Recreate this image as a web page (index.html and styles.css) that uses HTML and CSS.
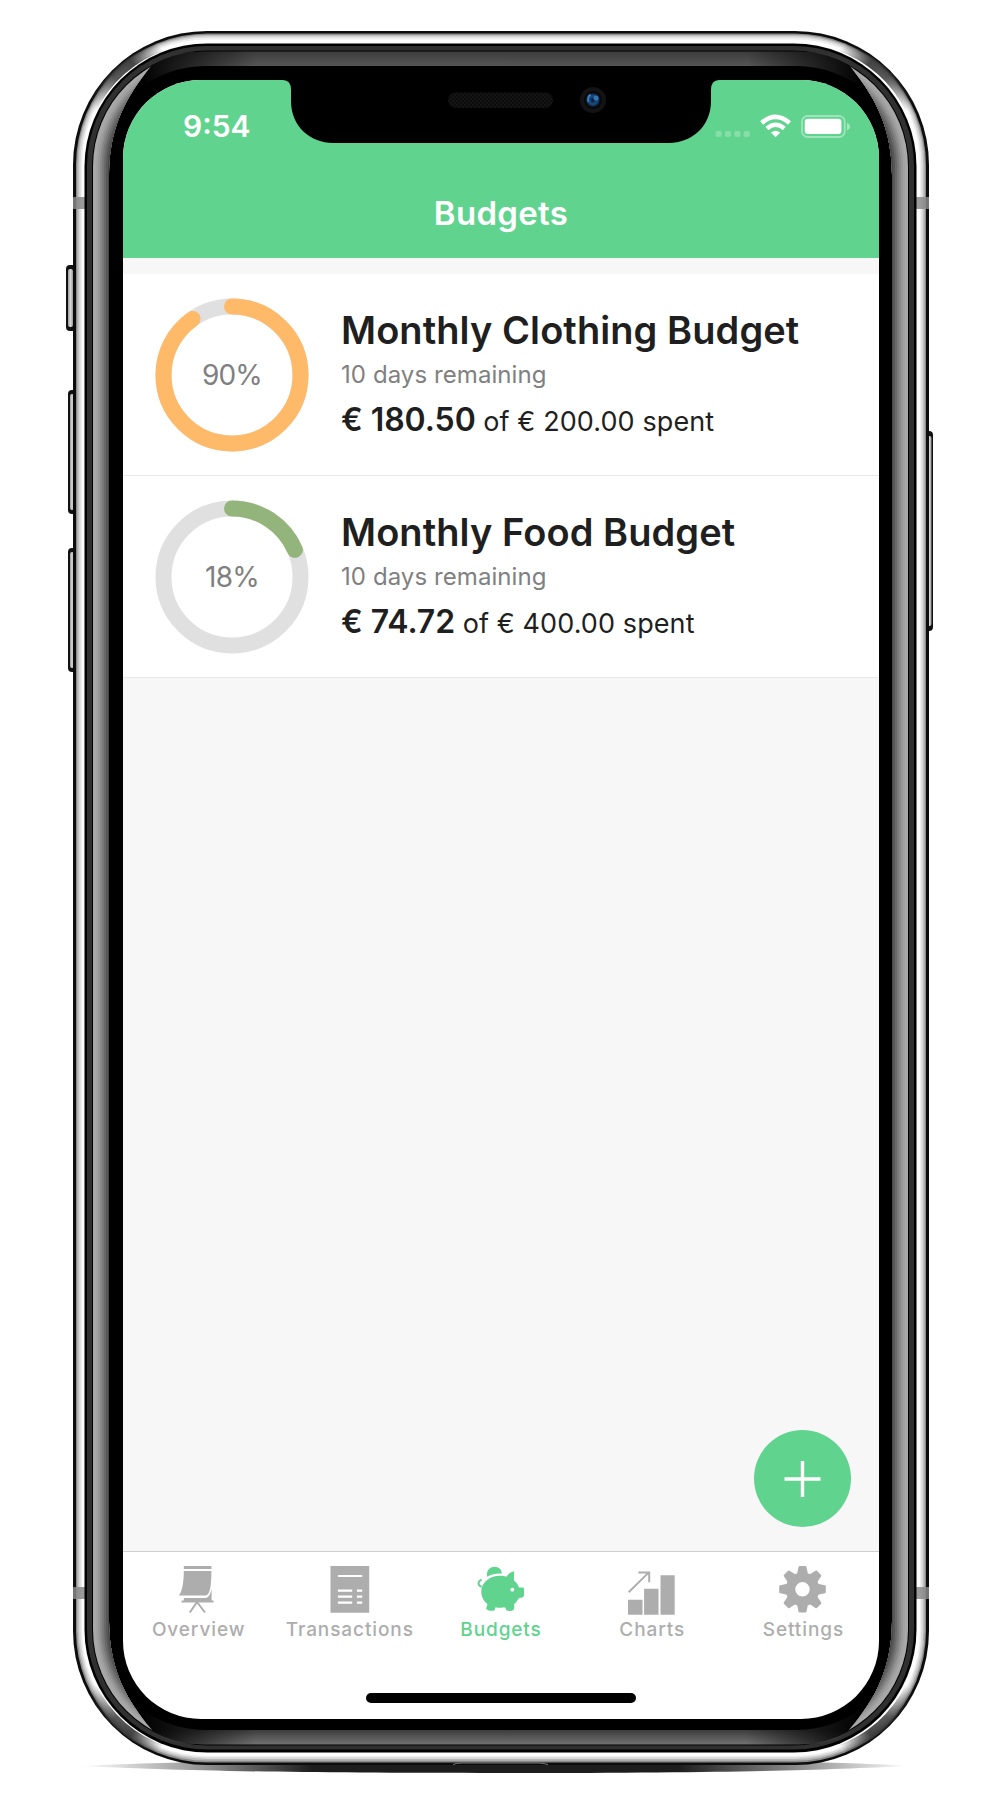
FILE: index.html
```html
<!DOCTYPE html>
<html lang="en">
<head>
<meta charset="utf-8">
<title>Budgets</title>
<link rel="stylesheet" href="styles.css">
</head>
<body>
<div class="phone">
  <svg class="frame" viewBox="0 0 1000 1802" aria-hidden="true">
    <defs>
      <linearGradient id="shadow" x1="0" x2="1"><stop offset="0" stop-color="#fff"/><stop offset=".14" stop-color="#999"/><stop offset=".28" stop-color="#1d1d1d"/><stop offset=".72" stop-color="#1d1d1d"/><stop offset=".86" stop-color="#888"/><stop offset="1" stop-color="#fff"/></linearGradient>
      <linearGradient id="button" x1="0" x2="1"><stop offset="0" stop-color="#999"/><stop offset=".5" stop-color="#d8d8d8"/><stop offset="1" stop-color="#999"/></linearGradient>
      <linearGradient id="glareT" gradientUnits="userSpaceOnUse" x1="0" x2="0" y1="51" y2="66"><stop offset="0" stop-color="#3c3c3c"/><stop offset="1" stop-color="#555"/></linearGradient>
      <linearGradient id="glareB" gradientUnits="userSpaceOnUse" x1="0" x2="0" y1="1730" y2="1745"><stop offset="0" stop-color="#3c3c3c"/><stop offset="1" stop-color="#747474"/></linearGradient>
      <linearGradient id="fade" gradientUnits="userSpaceOnUse" x1="140" x2="862" y1="0" y2="0"><stop offset="0" stop-color="#000"/><stop offset=".16" stop-color="#fff"/><stop offset=".84" stop-color="#fff"/><stop offset="1" stop-color="#000"/></linearGradient>
      <linearGradient id="corner" gradientUnits="userSpaceOnUse" x1="92" y1="108" x2="162" y2="48"><stop offset="0" stop-color="#333" stop-opacity="0"/><stop offset=".4" stop-color="#333" stop-opacity=".8"/><stop offset=".65" stop-color="#333" stop-opacity=".9"/><stop offset="1" stop-color="#333" stop-opacity="0"/></linearGradient>
      <mask id="ends" maskUnits="userSpaceOnUse" x="0" y="0" width="1000" height="1802"><rect x="140" y="40" width="722" height="1720" fill="url(#fade)"/></mask>
      <clipPath id="sides"><path d="M92 170C92 112 120 73 153 64C133 88 109 120 109 175V1621C109 1676 133 1708 153 1731C120 1722 92 1684 92 1626z"/><path d="M909 170C909 112 881 73 848 64C868 88 892 120 892 175V1621C892 1676 868 1708 848 1731C881 1722 909 1684 909 1626z"/></clipPath>
      <radialGradient id="lens"><stop offset="0" stop-color="#0b1730"/><stop offset=".6" stop-color="#1c4f86"/><stop offset="1" stop-color="#0a1628"/></radialGradient>
      <pattern id="mesh" width="4" height="4" patternUnits="userSpaceOnUse"><rect width="4" height="4" fill="#0c0c0c"/><circle cx="1" cy="1" r=".7" fill="#242424"/><circle cx="3" cy="3" r=".7" fill="#242424"/></pattern>
    </defs>
    <path d="M80 1766C180 1761 250 1761 501 1761S820 1761 910 1766C820 1770 740 1773 501 1773S170 1770 80 1766z" fill="url(#shadow)"/>
    <g fill="#111">
      <rect x="66" y="265" width="14" height="66" rx="4"/>
      <rect x="68" y="390" width="12" height="124" rx="4"/>
      <rect x="68" y="548" width="12" height="124" rx="4"/>
      <rect x="920" y="431" width="13" height="200" rx="4"/>
    </g>
    <g fill="url(#button)">
      <rect x="68" y="269" width="5" height="58" rx="2"/>
      <rect x="70" y="394" width="4" height="116" rx="2"/>
      <rect x="70" y="552" width="4" height="116" rx="2"/>
      <rect x="927" y="436" width="4.500" height="190" rx="2"/>
    </g>
    <rect x="73" y="31" width="856" height="1734" rx="134" fill="#0c0c0c"/>
    <rect x="76" y="33.500" width="850" height="1729" rx="131" fill="#8a8a8a"/>
    <rect x="77.200" y="34.700" width="847.600" height="1726" rx="130" fill="#b8b8b8"/>
    <rect x="78.700" y="36" width="844.600" height="1723" rx="128.500" fill="#d6d6d6"/>
    <rect x="80.500" y="37.500" width="841" height="1720" rx="127" fill="#eee"/>
    <rect x="82" y="39.500" width="838" height="1716.500" rx="125" fill="#fdfdfd"/>
    <g fill="none" stroke="url(#corner)" stroke-width="10">
      <path id="reflection" d="M91 110A127.500 127.500 0 0 1 165 45"/>
      <use href="#reflection" transform="translate(1002 0) scale(-1 1)"/>
      <use href="#reflection" transform="translate(0 1796) scale(1 -1)"/>
      <use href="#reflection" transform="translate(1002 1796) scale(-1 -1)"/>
    </g>
    <g fill="#888" opacity=".85">
      <rect x="73" y="197" width="13" height="12"/><rect x="915" y="197" width="14" height="12"/>
      <rect x="73" y="1587" width="13" height="12"/><rect x="915" y="1587" width="14" height="12"/>
    </g>
    <rect x="84.500" y="43.500" width="832" height="1709" rx="123" fill="#000"/>
    <rect x="87" y="46" width="827" height="1703.500" rx="120" fill="#303030"/>
    <rect x="92" y="50.500" width="817" height="1695" rx="116" fill="#000"/>
    <g mask="url(#ends)">
      <path d="M145 68C165 55 180 51.500 208 51.500H794C822 51.500 837 55 857 68V84C830 68 812 66 790 66H212C190 66 172 68 145 84z" fill="url(#glareT)"/>
      <path d="M145 1728C165 1741 180 1744.500 208 1744.500H794C822 1744.500 837 1741 857 1728V1712C830 1728 812 1730 790 1730H212C190 1730 172 1728 145 1712z" fill="url(#glareB)"/>
    </g>
    <g clip-path="url(#sides)">
      <rect x="93" y="51.500" width="815" height="1693" rx="115" fill="#a8a8a8"/>
      <rect x="96" y="54.500" width="809" height="1687" rx="112" fill="#a2a2a2"/>
      <rect x="98" y="56.500" width="805" height="1683" rx="110" fill="#979797"/>
      <rect x="100" y="58.500" width="801" height="1679" rx="108" fill="#888"/>
      <rect x="102" y="60.500" width="797" height="1675" rx="106" fill="#787878"/>
      <rect x="104" y="62.500" width="793" height="1671" rx="104" fill="#686868"/>
      <rect x="106" y="64.500" width="789" height="1667" rx="102" fill="#575757"/>
      <rect x="108" y="66.500" width="785" height="1663" rx="100" fill="#484848"/>
    </g>
    <path d="M453 1764.500Q456 1763 462 1763H538Q543 1763 548 1764.500" fill="none" stroke="#777"/>
  </svg>

  <main class="screen">
    <header class="header">
      <div class="status">
        <span class="time">9:54</span>
        <svg class="indicators" width="136" height="28" viewBox="715 112 136 28" fill="#fff" aria-hidden="true">
          <g opacity=".25"><rect x="715.700" y="131" width="6" height="6" rx="1.700"/><rect x="725" y="131" width="6" height="6" rx="1.700"/><rect x="734.400" y="131" width="6" height="6" rx="1.700"/><rect x="743.700" y="131" width="6" height="6" rx="1.700"/></g>
          <path d="M775.600 137.200L770.900 132.500Q775.600 128.800 780.300 132.500z"/>
          <path d="M766.900 128.500Q775.600 120.900 784.300 128.500" fill="none" stroke="#fff" stroke-width="4.400"/>
          <path d="M761.700 122.900Q775.600 110.900 789.500 122.900" fill="none" stroke="#fff" stroke-width="4.600"/>
          <rect x="802" y="116" width="42.700" height="21" rx="5.500" fill="none" stroke="#fff" stroke-width="1.800" opacity=".4"/>
          <rect x="804.700" y="118.700" width="36.700" height="15.400" rx="3"/>
          <path d="M847 123C851 124.500 851 129 847 130.500z" opacity=".45"/>
        </svg>
      </div>
      <h1 class="title">Budgets</h1>
    </header>

    <section class="content">
      <article class="budget">
        <div class="ring">
          <svg width="154" height="154" viewBox="0 0 154 154" aria-hidden="true"><circle class="track" cx="77" cy="77" r="68.500"/><circle class="value clothing" cx="77" cy="77" r="68.500" pathLength="100" stroke-dasharray="90.250 100"/></svg>
          <span class="percent">90%</span>
        </div>
        <div class="details">
          <h2 class="name">Monthly Clothing Budget</h2>
          <p class="remaining">10 days remaining</p>
          <p class="amount"><strong>€ 180.50</strong><span>of € 200.00 spent</span></p>
        </div>
      </article>
      <article class="budget">
        <div class="ring">
          <svg width="154" height="154" viewBox="0 0 154 154" aria-hidden="true"><circle class="track" cx="77" cy="77" r="68.500"/><circle class="value food" cx="77" cy="77" r="68.500" pathLength="100" stroke-dasharray="18.500 100"/></svg>
          <span class="percent">18%</span>
        </div>
        <div class="details">
          <h2 class="name">Monthly Food Budget</h2>
          <p class="remaining">10 days remaining</p>
          <p class="amount"><strong>€ 74.72</strong><span>of € 400.00 spent</span></p>
        </div>
      </article>
      <button class="add" aria-label="Add budget"><svg width="38" height="38" viewBox="0 0 38 38"><path d="M18.500 1V37M.5 19H36.500" stroke="#fff" stroke-width="3.400"/></svg></button>
    </section>

    <nav class="tabs">
      <a class="tab">
        <svg class="icon" viewBox="0 0 48 52"><g transform="translate(-.8 0)"><path d="M9.600 2H37.200V5H9.600zM9.600 7H37.200C37.200 20 36 31.500 31.500 31.500H4.500C8 28 9.600 18 9.600 7zM9.600 34H31C34 34 36 31 37.400 25V36.500H39.400V38.500H7.400V36.500H9.600z"/><path class="line" d="M22.800 38L15.600 48.500M22.800 38L30.800 48.500"/></g></svg>
        <span>Overview</span>
      </a>
      <a class="tab">
        <svg class="icon" viewBox="0 0 48 52"><path d="M4.500 2H43.200V48.700H4.500z"/><path d="M11.900 12H36.200M11.900 26.700H26.200M30.900 26.700H36.200M11.900 32.700H26.200M30.900 32.700H36.200M11.900 38.700H26.200M30.900 38.700H36.200" stroke="#fff" stroke-width="2.200"/></svg>
        <span>Transactions</span>
      </a>
      <a class="tab active">
        <svg class="icon" viewBox="0 0 48 52"><path d="M10.200 12.700C9 7 12.500 2.800 17.400 2.800C22 2.800 25 6 24.800 9.600C19.500 9.300 14.500 10.400 10.200 12.700z"/><path d="M23 11.800C25.500 11.800 27.500 12.100 29.300 12.700C31 10 34 7.800 37.300 7.300C36.900 10.500 37 14 36.900 16.500C39.500 18.500 41 20.600 42 23.600H45.500Q47 23.600 47 25V31.500Q46.500 34 42 34C40.700 36.500 38.500 39 36.800 40.500C37.800 42 37.500 44 36.400 46.200C34 47.200 31 47.200 29 46C29 44 28 43.300 27 43.300C24 44 21 44 18.500 43.300C18 45 17.800 46 17.300 46.600C14.500 47.200 11 46.700 9.200 45C9.500 43 9.800 42 10.500 40.200C7 37.500 4.300 33 4.300 27.500C4.300 19 12 11.800 23 11.800z"/><circle cx="35.300" cy="25.700" r="1.900" fill="#fff"/><path class="line" d="M4.600 15.700C1.500 16.600.9 19.300 2.200 21.200C3 22.300 3.700 22.600 4.700 22.700"/></svg>
        <span>Budgets</span>
      </a>
      <a class="tab">
        <svg class="icon" viewBox="0 0 48 52"><path d="M0 35.700H14.500V50.700H0zM16.100 24.700H30.500V50.700H16.100zM32.500 11.300H46.700V50.700H32.500z"/><path class="line" d="M.6 28.200L20.600 8.600M10.300 8.400H21.200V18.200"/></svg>
        <span>Charts</span>
      </a>
      <a class="tab">
        <svg class="icon" viewBox="0 0 48 52"><g transform="translate(23.500 25.300)"><circle r="12" fill="none" stroke="currentColor" stroke-width="9.600"/><g id="teeth"><path id="tooth" d="M-5.700 -14L-4 -22.300Q-3.800 -23.300 -3 -23.300H3Q3.800 -23.300 4 -22.300L5.700 -14z"/><use href="#tooth" transform="rotate(45)"/><use href="#tooth" transform="rotate(90)"/><use href="#tooth" transform="rotate(135)"/></g><use href="#teeth" transform="rotate(180)"/></g></svg>
        <span>Settings</span>
      </a>
    </nav>
    <div class="home"></div>
  </main>

  <svg class="notch" width="436" height="64" viewBox="283 80 436 64" aria-hidden="true">
    <path d="M283 79V80Q291 80 291 90V101C291 127 311 143 333 143H669C691 143 711 127 711 101V90Q711 80 719 80V79z" fill="#000"/>
    <rect x="448" y="92.500" width="105" height="15.500" rx="7.700" fill="url(#mesh)"/>
    <circle cx="593" cy="100" r="13" fill="#131313"/><circle cx="593" cy="100" r="9" fill="#090909"/><circle cx="593" cy="100" r="7" fill="url(#lens)"/><path d="M588.500 102Q587 97 590.500 94.500" fill="none" stroke="#3b80c4" stroke-width="1.800"/><circle cx="596" cy="98" r="2.500" fill="#3474b8"/>
  </svg>
</div>
</body>
</html>
```
FILE: styles.css
```css
* { box-sizing: border-box; }

body {
  margin: 0;
  background: #fff;
  font-family: Inter, "Liberation Sans", sans-serif;
  color: #1f1f1f;
}

h1, h2, p { margin: 0; }

.phone {
  position: relative;
  width: 1000px;
  height: 1802px;
  padding: 80px 121px 83px 123px;
}

.frame {
  position: absolute;
  inset: 0;
  width: 1000px;
  height: 1802px;
}

.notch {
  position: absolute;
  left: 283px;
  top: 80px;
}

.screen {
  position: relative;
  display: flex;
  flex-direction: column;
  height: 1639px;
  overflow: hidden;
  border-radius: 78px;
  background: #fff;
}

.header {
  height: 178px;
  padding-top: 28px;
  background: #60d38e;
  color: #fff;
}

.status {
  display: flex;
  justify-content: space-between;
  height: 36px;
  padding: 0 28px 0 60px;
}

.time {
  font-size: 30px;
  font-weight: 600;
  line-height: 37px;
}

.indicators { margin-top: 4px; }

.title {
  margin-top: 49px;
  font-size: 33px;
  font-weight: 600;
  line-height: 40px;
  letter-spacing: 0.3px;
  text-align: center;
}

.content {
  position: relative;
  flex: 1;
  padding-top: 16px;
  background: #f7f7f7;
}

.budget {
  display: flex;
  gap: 32px;
  height: 202px;
  padding-left: 32px;
  border-bottom: 1px solid #e8e8e8;
  background: #fff;
}

.ring {
  display: grid;
  margin-top: 23.5px;
  width: 154px;
  height: 154px;
}

.ring > * { grid-area: 1 / 1; }

.ring circle {
  fill: none;
  stroke-width: 16px;
}

.track { stroke: #e0e0e0; }

.value {
  stroke-linecap: round;
  transform: rotate(-90deg);
  transform-origin: center;
}

.clothing { stroke: #ffba69; }
.food { stroke: #93b57b; }

.percent {
  place-self: center;
  font-size: 28px;
  letter-spacing: -0.8px;
  color: #808080;
}

.details { padding-top: 33px; }

.name {
  font-size: 38px;
  font-weight: 600;
  line-height: 46px;
  letter-spacing: 0.08px;
}

.remaining {
  margin-top: 7px;
  font-size: 24px;
  line-height: 30px;
  letter-spacing: 0.08px;
  color: #808080;
}

.amount {
  display: flex;
  align-items: baseline;
  gap: 7.5px;
  margin-top: 10px;
  font-size: 27px;
  line-height: 40px;
  letter-spacing: 0.1px;
}

.amount strong {
  font-size: 32px;
  font-weight: 600;
  letter-spacing: -0.05px;
}

.add {
  position: absolute;
  right: 28px;
  bottom: 24px;
  display: grid;
  place-items: center;
  width: 97px;
  height: 97px;
  padding: 0;
  border: 0;
  border-radius: 50%;
  background: #60d38e;
}

.tabs {
  display: grid;
  grid-template-columns: repeat(5, 1fr);
  height: 142px;
  padding-top: 12px;
  border-top: 1px solid #d0d0d0;
}

.tab {
  display: flex;
  flex-direction: column;
  align-items: center;
  gap: 2px;
  color: #adadad;
  font-size: 19px;
  font-weight: 450;
  line-height: 24px;
  letter-spacing: 0.9px;
}

.tab.active {
  color: #60d38e;
  font-weight: 550;
}

.icon {
  width: 48px;
  height: 52px;
  fill: currentColor;
}

.line {
  fill: none;
  stroke: currentColor;
  stroke-width: 2px;
}

.home {
  width: 270px;
  height: 10px;
  margin: 0 auto 16px;
  border-radius: 5px;
  background: #000;
}
```
